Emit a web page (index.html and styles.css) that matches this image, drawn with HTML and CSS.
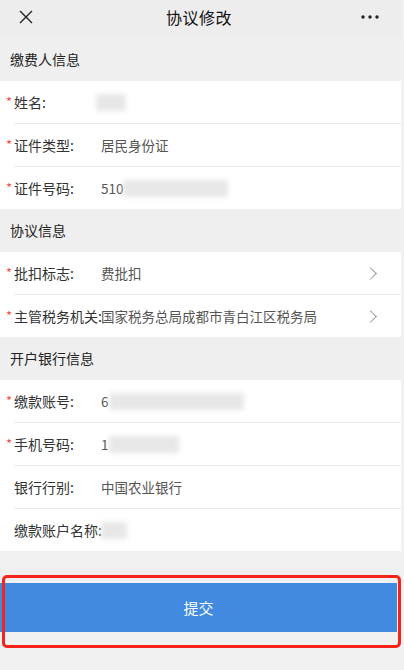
FILE: index.html
```html
<!DOCTYPE html>
<html lang="zh-CN">

<head>
  <meta name="viewport" content="width=device-width, initial-scale=1.0">
  <meta charset="utf-8">
  <title>协议修改</title>
  <link rel="stylesheet" href="styles.css">
</head>

<body>
  <div class="page">
    <div class="topbar">
      <span class="close">
        <svg width="14" height="14" viewBox="0 0 14 14"><path d="M1 1L13 13M13 1L1 13" stroke="#222" stroke-width="1.4" fill="none"/></svg>
      </span>
      <span class="title">协议修改</span>
      <span class="more">
        <svg width="18" height="4" viewBox="0 0 18 4"><circle cx="2" cy="2" r="1.7" fill="#222"/><circle cx="9" cy="2" r="1.7" fill="#222"/><circle cx="16" cy="2" r="1.7" fill="#222"/></svg>
      </span>
    </div>

    <div class="section">缴费人信息</div>
    <ul class="list">
      <li class="row"><i>*</i><span class="label">姓名:</span><span class="value"><em class="mask w30 shift"></em></span></li>
      <li class="row"><i>*</i><span class="label">证件类型:</span><span class="value">居民身份证</span></li>
      <li class="row"><i>*</i><span class="label">证件号码:</span><span class="value">510<em class="mask w105"></em></span></li>
    </ul>

    <div class="section">协议信息</div>
    <ul class="list">
      <li class="row"><i>*</i><span class="label">批扣标志:</span><span class="value">费批扣</span><span class="arrow"></span></li>
      <li class="row"><i>*</i><span class="label">主管税务机关:</span><span class="value">国家税务总局成都市青白江区税务局</span><span class="arrow"></span></li>
    </ul>

    <div class="section">开户银行信息</div>
    <ul class="list">
      <li class="row"><i>*</i><span class="label">缴款账号:</span><span class="value">6<em class="mask w135"></em></span></li>
      <li class="row"><i>*</i><span class="label">手机号码:</span><span class="value">1<em class="mask w70"></em></span></li>
      <li class="row"><span class="label">银行行别:</span><span class="value">中国农业银行</span></li>
      <li class="row"><span class="label">缴款账户名称:</span><span class="value"><em class="mask w26"></em></span></li>
    </ul>

    <div class="footer">
      <button class="submit">提交</button>
      <span class="mark"></span>
    </div>
  </div>
</body>

</html>
```

FILE: styles.css
```css
body, div, ul, li, button {
  margin: 0;
  padding: 0;
}

ul {
  list-style: none;
}

body {
  background: #f1f1f1;
  font: 14px/20px "Noto Sans CJK SC", "Noto Sans", sans-serif;
  color: #333;
}

.page {
  width: 401px;
  min-height: 670px;
  background: #f0f0f0;
}

.topbar {
  height: 38px;
  background: #ededed;
  display: flex;
  align-items: center;
  justify-content: space-between;
  padding: 0 22px 0 19px;
}

.topbar .close,
.topbar .more {
  display: flex;
  width: 18px;
}

.topbar .close svg,
.topbar .more svg {
  margin-top: -4px;
}

.topbar .title {
  font-size: 16px;
  color: #111;
  margin-top: -4px;
  letter-spacing: 0.5px;
}

.section {
  height: 43px;
  line-height: 43px;
  padding-left: 10px;
  background: #efefef;
  color: #222;
  font-size: 14px;
}

.list {
  background: #fff;
  padding-left: 14px;
}

.row {
  height: 42px;
  display: flex;
  align-items: center;
  border-bottom: 1px solid #ececec;
}

.row:last-child {
  border-bottom: none;
}

.row i {
  font-style: normal;
  color: #f5504a;
  width: 8px;
  margin-left: -8px;
  font-size: 13px;
}

.row .label {
  width: 87px;
  flex-shrink: 0;
  white-space: nowrap;
  color: #333;
}

.row .value {
  flex: 1;
  color: #555;
  font-size: 13.5px;
  display: flex;
  align-items: center;
  white-space: nowrap;
}

.mask {
  display: inline-block;
  height: 17px;
  background: #e3e3e3;
  filter: blur(2.5px);
  opacity: 0.85;
}

.mask.shift {
  margin-left: -5px;
}

.w26 { width: 26px; }
.w30 { width: 30px; }
.w70 { width: 70px; }
.w105 { width: 105px; }
.w135 { width: 135px; }

.arrow {
  width: 8px;
  height: 8px;
  border-top: 1.3px solid #999;
  border-right: 1.3px solid #999;
  transform: rotate(45deg);
  margin-right: 26px;
}

.footer {
  position: relative;
  padding-top: 32px;
}

.submit {
  display: block;
  width: 397px;
  height: 49px;
  border: none;
  background: #418ae0;
  color: #fff;
  font: 15px "Noto Sans CJK SC", "Noto Sans", sans-serif;
}

.mark {
  position: absolute;
  left: 2px;
  top: 24px;
  width: 393px;
  height: 67px;
  border: 3px solid #f5231a;
  border-radius: 5px;
}
```
